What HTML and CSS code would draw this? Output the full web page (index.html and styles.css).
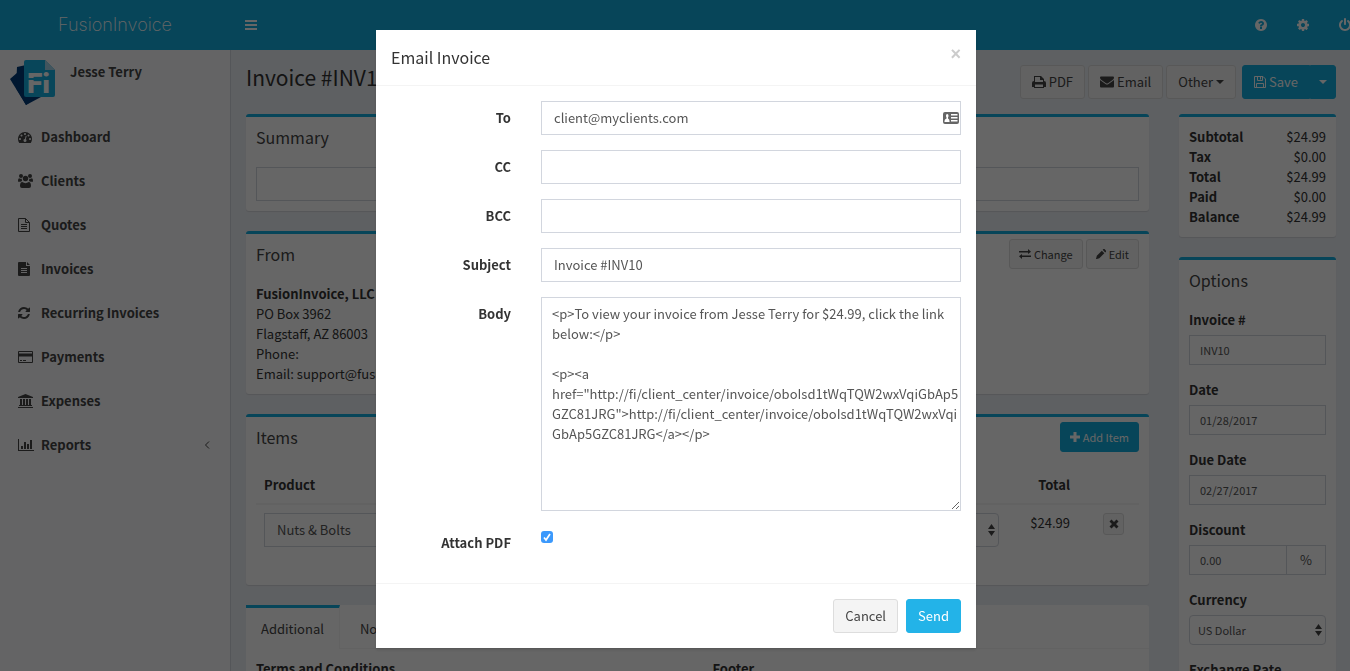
FILE: index.html
```
<!DOCTYPE html>
<html lang="en">
<head>
    <meta charset="UTF-8">
    <meta name="viewport" content="width=device-width, initial-scale=1.0">
    <title>FusionInvoice</title>
    <link rel="stylesheet" href="styles.css">
</head>
<body class="modal-open">

    <header class="main-header">
        <a href="#" class="logo">FusionInvoice</a>
        <nav class="navbar">
            <a href="#" class="sidebar-toggle" aria-label="Toggle navigation">
                <svg class="icon" viewBox="0 0 14 14"><path d="M1 2h12v2H1zM1 6h12v2H1zM1 10h12v2H1z"/></svg>
            </a>
            <div class="navbar-menu">
                <a href="#" aria-label="Help">
                    <svg class="icon" viewBox="0 0 1792 1792"><path d="M1024 1376v-192q0-14-9-23t-23-9h-192q-14 0-23 9t-9 23v192q0 14 9 23t23 9h192q14 0 23-9t9-23zm256-672q0-88-55.500-163t-138.500-116-170-41q-243 0-371 213-15 24 8 42l132 100q7 6 19 6 16 0 25-12 53-68 86-92 34-24 86-24 48 0 85.500 26t37.500 59q0 38-20 61t-68 45q-63 28-115.500 86.500t-52.500 125.500v36q0 14 9 23t23 9h192q14 0 23-9t9-23q0-19 21.500-49.500t54.500-49.500q32-18 49-28.500t46-35 44.500-48 28-60.500 12.500-81zm384 192q0 209-103 385.500t-279.500 279.500-385.500 103-385.500-103-279.500-279.500-103-385.500 103-385.500 279.500-279.500 385.500-103 385.500 103 279.500 279.500 103 385.500z"/></svg>
                </a>
                <a href="#" aria-label="Settings">
                    <svg class="icon" viewBox="0 0 1792 1792"><path d="M1152 896q0-106-75-181t-181-75-181 75-75 181 75 181 181 75 181-75 75-181zm512-109v222q0 12-8 23t-20 13l-185 28q-19 54-39 91 35 50 107 138 10 12 10 25t-9 23q-27 37-99 108t-94 71q-12 0-26-9l-138-108q-44 23-91 38-16 136-29 186-7 28-36 28h-222q-14 0-24.500-8.500t-11.500-21.500l-28-184q-49-16-90-37l-141 107q-10 9-25 9-14 0-25-11-126-114-165-168-7-10-7-23 0-12 8-23 15-21 51-66.500t54-70.500q-27-50-41-99l-183-27q-13-2-21-12.500t-8-23.500v-222q0-12 8-23t19-13l186-28q14-46 39-92-40-57-107-138-10-12-10-24 0-10 9-23 26-36 98.500-107.500t94.500-71.500q13 0 26 10l138 107q44-23 91-38 16-136 29-186 7-28 36-28h222q14 0 24.500 8.500t11.500 21.500l28 184q49 16 90 37l142-107q9-9 24-9 13 0 25 10 129 119 165 170 7 8 7 22 0 12-8 23-15 21-51 66.500t-54 70.500q26 50 41 98l183 28q13 2 21 12.500t8 23.500z"/></svg>
                </a>
                <a href="#" aria-label="Sign out">
                    <svg class="icon" viewBox="0 0 1792 1792"><path d="M1664 896q0 156-61 298t-164 245-245 164-298 61-298-61-245-164-164-245-61-298q0-182 80.500-343t226.500-270q43-32 95.500-25t83.500 50q32 42 24.500 94.500t-49.500 84.500q-98 74-151.500 181t-53.500 228q0 104 40.500 198.500t109.500 163.500 163.500 109.500 198.500 40.500 198.500-40.500 163.500-109.500 109.500-163.500 40.500-198.500q0-121-53.500-228t-151.500-181q-42-32-49.500-84.500t24.500-94.500q31-43 84-50t95 25q146 109 226.500 270t80.500 343zm-640-768v640q0 52-38 90t-90 38-90-38-38-90v-640q0-52 38-90t90-38 90 38 38 90z"/></svg>
                </a>
            </div>
        </nav>
    </header>

    <div class="wrapper">
        <aside class="sidebar">
            <div class="user-panel">
                <svg class="user-logo" viewBox="0 0 45 45">
                    <path d="M0 19L15 6l16 31-15 8z" fill="#003a78"/>
                    <path d="M7 7l9-2v30l10 3-10 7L6 28z" fill="#003a78"/>
                    <path d="M16 0h19l10 10v25q0 2-2 2H16q-2 0-2-2V2q0-2 2-2z" fill="#14aee2"/>
                    <path d="M35 0l10 10H35z" fill="#a5d5ea"/>
                    <text x="17" y="33" class="user-logo-text">Fi</text>
                    <path d="M18 18h22v2H18z" fill="#14aee2"/>
                </svg>
                <span>Jesse Terry</span>
            </div>
            <ul class="sidebar-menu">
                <li><a href="#">
                    <svg class="icon" viewBox="0 0 1792 1792"><path d="M384 1152q0-53-37.500-90.500t-90.500-37.500-90.500 37.500-37.500 90.500 37.500 90.500 90.500 37.500 90.500-37.500 37.500-90.500zm192-448q0-53-37.500-90.500t-90.500-37.500-90.500 37.500-37.500 90.500 37.500 90.500 90.500 37.500 90.500-37.500 37.500-90.500zm428 481l101-382q6-26-7.500-48.500t-38.500-29.500-48 6.500-30 39.500l-101 382q-60 5-107 43.500t-63 98.500q-20 77 20 146t117 89 146-20 89-117q16-60-6-117t-72-91zm660-33q0-53-37.500-90.500t-90.500-37.500-90.500 37.500-37.500 90.500 37.500 90.500 90.500 37.500 90.500-37.500 37.500-90.500zm-640-640q0-53-37.500-90.500t-90.500-37.500-90.500 37.500-37.500 90.500 37.500 90.500 90.500 37.500 90.500-37.500 37.500-90.500zm448 192q0-53-37.500-90.500t-90.500-37.500-90.500 37.500-37.500 90.500 37.500 90.500 90.500 37.500 90.500-37.500 37.500-90.500zm320 448q0 261-141 483-19 29-54 29h-1402q-35 0-54-29-141-221-141-483 0-182 71-348t191-286 286-191 348-71 348 71 286 191 191 286 71 348z"/></svg>
                    <span>Dashboard</span></a></li>
                <li><a href="#">
                    <svg class="icon icon-wide" viewBox="0 0 15 14"><circle cx="3" cy="2" r="2"/><circle cx="12" cy="2" r="2"/><circle cx="7.500" cy="4.500" r="2.700"/><path d="M0 7.500Q0 4.300 1.300 4.300q1.200.8 2.500.4Q3.600 6 4.200 7 3.300 7 2.500 7.800H1Q0 7.800 0 7.500zM15 7.500Q15 4.300 13.700 4.300q-1.200.8-2.500.4Q11.400 6 10.800 7q.9 0 1.700.8H14q1 0 1-.3zM2 12q0-4 2.300-4Q7.500 10.300 10.700 8 13 8 13 12q0 2-2 2H4q-2 0-2-2z"/></svg>
                    <span>Clients</span></a></li>
                <li><a href="#">
                    <svg class="icon" viewBox="1 0 14 14"><path d="M1.500.5h7l4 4v9h-11zM8.500.5v4h4M4 6.500h6M4 8.500h6M4 10.500h6" class="stroke"/></svg>
                    <span>Quotes</span></a></li>
                <li><a href="#">
                    <svg class="icon" viewBox="0 0 14 14"><path fill-rule="evenodd" d="M1 0h7v4h4v9q0 1-1 1H1q-1 0-1-1V1q0-1 1-1zM9 0l3 3H9zM3 6v1h6V6zM3 8v1h6V8zM3 10v1h6v-1z"/></svg>
                    <span>Invoices</span></a></li>
                <li><a href="#">
                    <svg class="icon" viewBox="128 0 1792 1792"><path d="M1639 1056q0 5-1 7-64 268-268 434.500t-478 166.500q-146 0-282.500-55t-243.500-157l-129 129q-19 19-45 19t-45-19-19-45v-448q0-26 19-45t45-19h448q26 0 45 19t19 45-19 45l-137 137q71 66 161 102t187 36q134 0 250-65t186-179q11-17 53-117 8-23 30-23h192q13 0 22.500 9.500t9.500 22.500zm25-800v448q0 26-19 45t-45 19h-448q-26 0-45-19t-19-45 19-45l138-138q-148-137-349-137-134 0-250 65t-186 179q-11 17-53 117-8 23-30 23h-199q-13 0-22.500-9.500t-9.500-22.500v-7q65-268 270-434.500t480-166.500q146 0 284 55.500t245 156.500l130-129q19-19 45-19t45 19 19 45z"/></svg>
                    <span>Recurring Invoices</span></a></li>
                <li><a href="#">
                    <svg class="icon icon-wide" viewBox="0 0 15 14"><path fill-rule="evenodd" d="M1 1h13q1 0 1 1v10q0 1-1 1H1q-1 0-1-1V2q0-1 1-1zM1 2v1.500h13V2zM1 6.500V12h13V6.500zM2 10h2v1H2zM5 10h3v1H5z"/></svg>
                    <span>Payments</span></a></li>
                <li><a href="#">
                    <svg class="icon icon-wide" viewBox="0 0 15 14"><path d="M7.500 0L15 3v1H0V3zM2 5h2v6h1V5h2v6h1V5h2v6h1V5h2v6h1v1H1v-1h1zM0 13h15v1H0z"/></svg>
                    <span>Expenses</span></a></li>
                <li><a href="#">
                    <svg class="icon icon-chart" viewBox="0 0 16 14"><path d="M0 1h1v11h15v1H0zM3 8h2v3H3zM6 4h2v7H6zM9 6h2v5H9zM12 2h2v9h-2z"/></svg>
                    <span>Reports</span>
                    <svg class="icon" viewBox="0 0 14 14"><path d="M9 3.500L5.500 7 9 10.500" class="stroke"/></svg></a></li>
            </ul>
        </aside>

        <main class="content">
            <section class="content-header">
                <h1>Invoice #INV10</h1>
                <div class="actions">
                    <button class="btn btn-default"><svg class="icon" viewBox="0 0 14 14"><path fill-rule="evenodd" d="M2 1h7l3 3v2q2 0 2 2v4h-2v1H2v-1H0V8q0-2 2-2zM3 2v5h8V5H8V2zM3 9.500V12h8V9.500z"/></svg> PDF</button>
                    <button class="btn btn-default"><svg class="icon" viewBox="0 0 14 14"><path d="M0 2.500Q0 1.500 1 1.500h12q1 0 1 1Q14 4 12.500 5L8 8.200q-1 .6-2 0L1.500 5Q0 4 0 2.500zM0 5l5.500 4q1.500 1 3 0L14 5v6.500q0 1-1 1H1q-1 0-1-1z"/></svg> Email</button>
                    <button class="btn btn-default">Other <span class="caret"></span></button>
                    <div class="btn-group">
                        <button class="btn btn-primary"><svg class="icon icon-save" viewBox="0 0 12 14"><path d="M.5 1.500h8.500l2.500 2.500v8.500H.5zM3.500 1.500v4h5v-4M2.500 12.500V8.500h7v4M6.500 2v2.500" class="stroke"/></svg> Save</button>
                        <button class="btn btn-primary btn-caret" aria-label="More save options"><span class="caret"></span></button>
                    </div>
                </div>
            </section>

            <div class="row">
                <div class="col-main">
                    <section class="box">
                        <div class="box-header"><h3><label for="summary">Summary</label></h3></div>
                        <div class="box-body"><input type="text" id="summary" class="form-control"></div>
                    </section>

                    <section class="box">
                        <div class="box-header">
                            <h3>From</h3>
                            <div class="box-tools">
                                <button class="btn btn-default btn-sm"><svg class="icon icon-sm" viewBox="0 0 12 12"><path d="M0 3h9V1l3 2.700L9 6V4.500H0zM12 7.500H3V6L0 8.300 3 11V9h9z"/></svg> Change</button>
                                <button class="btn btn-default btn-sm"><svg class="icon icon-xs" viewBox="0 0 12 12"><path d="M1 8l6-6 3 3-6 6-3 1H0zM8 1l1-1q.6-.3 1.200 0L12 2q.4.600 0 1.200l-1 1z"/></svg> Edit</button>
                            </div>
                        </div>
                        <div class="box-body">
                            <strong>FusionInvoice, LLC</strong><br>
                            PO Box 3962<br>
                            Flagstaff, AZ 86003<br>
                            Phone:<br>
                            Email: support@fusioninvoice.com
                        </div>
                    </section>

                    <section class="box">
                        <div class="box-header">
                            <h3>Items</h3>
                            <div class="box-tools">
                                <button class="btn btn-primary btn-sm"><svg class="icon icon-xs" viewBox="0 0 10 10"><path d="M3.500 0h3v3.500H10v3H6.500V10h-3V6.500H0v-3h3.500z"/></svg> Add Item</button>
                            </div>
                        </div>
                        <div class="box-body">
                            <table class="items">
                                <thead>
                                    <tr>
                                        <th>Product</th>
                                        <th>Description</th>
                                        <th>Quantity</th>
                                        <th>Price</th>
                                        <th>Tax</th>
                                        <th class="total">Total</th>
                                        <th class="remove"></th>
                                    </tr>
                                </thead>
                                <tbody>
                                    <tr>
                                        <td><input type="text" class="form-control" value="Nuts &amp; Bolts" aria-label="Product"></td>
                                        <td><input type="text" class="form-control" aria-label="Description"></td>
                                        <td><input type="text" class="form-control" value="1.00" aria-label="Quantity"></td>
                                        <td><input type="text" class="form-control" value="24.99" aria-label="Price"></td>
                                        <td>
                                            <div class="select">
                                                <select class="form-control" aria-label="Tax"><option>None</option></select>
                                                <svg viewBox="0 0 7 12"><path d="M3.500 0L7 5H0zM0 7h7l-3.500 5z"/></svg>
                                            </div>
                                        </td>
                                        <td class="total">$24.99</td>
                                        <td class="remove"><button class="btn btn-default btn-xs" aria-label="Remove item"><svg class="icon icon-xs" viewBox="0 0 10 10"><path d="M2.500.5L5 3 7.500.5l2 2L7 5l2.500 2.500-2 2L5 7 2.500 9.500l-2-2L3 5 .5 2.500z"/></svg></button></td>
                                    </tr>
                                </tbody>
                            </table>
                        </div>
                    </section>

                    <section class="tabs">
                        <ul class="nav-tabs">
                            <li class="active"><a href="#">Additional</a></li>
                            <li><a href="#">Notes</a></li>
                            <li><a href="#">Payments</a></li>
                        </ul>
                        <div class="tab-content">
                            <div>
                                <label for="terms">Terms and Conditions</label>
                                <textarea id="terms" class="form-control" rows="5"></textarea>
                            </div>
                            <div>
                                <label for="footer">Footer</label>
                                <textarea id="footer" class="form-control" rows="5"></textarea>
                            </div>
                        </div>
                    </section>
                </div>

                <div class="col-side">
                    <section class="box">
                        <dl class="box-body totals">
                            <dt>Subtotal</dt><dd>$24.99</dd>
                            <dt>Tax</dt><dd>$0.00</dd>
                            <dt>Total</dt><dd>$24.99</dd>
                            <dt>Paid</dt><dd>$0.00</dd>
                            <dt>Balance</dt><dd>$24.99</dd>
                        </dl>
                    </section>

                    <section class="box">
                        <div class="box-header"><h3>Options</h3></div>
                        <div class="box-body options">
                            <div class="form-group">
                                <label for="number">Invoice #</label>
                                <input type="text" id="number" class="form-control input-sm" value="INV10">
                            </div>
                            <div class="form-group">
                                <label for="date">Date</label>
                                <input type="text" id="date" class="form-control input-sm" value="01/28/2017">
                            </div>
                            <div class="form-group">
                                <label for="due">Due Date</label>
                                <input type="text" id="due" class="form-control input-sm" value="02/27/2017">
                            </div>
                            <div class="form-group">
                                <label for="discount">Discount</label>
                                <div class="input-group">
                                    <input type="text" id="discount" class="form-control input-sm" value="0.00">
                                    <span class="addon">%</span>
                                </div>
                            </div>
                            <div class="form-group">
                                <label for="currency">Currency</label>
                                <div class="select select-sm">
                                    <select id="currency" class="form-control input-sm"><option>US Dollar</option></select>
                                    <svg viewBox="0 0 7 12"><path d="M3.500 0L7 5H0zM0 7h7l-3.500 5z"/></svg>
                                </div>
                            </div>
                            <div class="form-group">
                                <label for="rate">Exchange Rate</label>
                                <input type="text" id="rate" class="form-control input-sm" value="1.0000000">
                            </div>
                        </div>
                    </section>
                </div>
            </div>
        </main>
    </div>

    <div class="modal-backdrop">
        <div class="modal" role="dialog" aria-labelledby="modal-title">
            <div class="modal-header">
                <h4 id="modal-title">Email Invoice</h4>
                <button class="close" aria-label="Close">×</button>
            </div>
            <form class="modal-body">
                <label for="to">To</label>
                <div class="contact-field">
                    <input type="text" id="to" class="form-control" value="client@myclients.com">
                    <svg viewBox="0 0 16 12"><path fill-rule="evenodd" d="M2 0h12q2 0 2 2v8q0 2-2 2H2q-2 0-2-2V2q0-2 2-2zM3 3.500Q3 5 3.500 5.500v1Q1.500 7 1.500 9v1h5V9q0-2-1.500-2.500v-1Q5.500 5 5.500 3.500 5.500 2 4.200 2T3 3.500zM8 2v1.500h6.500V2zM8 5v1.500h6.500V5zM8 8v1.500h6.500V8z"/></svg>
                </div>
                <label for="cc">CC</label>
                <input type="text" id="cc" class="form-control">
                <label for="bcc">BCC</label>
                <input type="text" id="bcc" class="form-control">
                <label for="subject">Subject</label>
                <input type="text" id="subject" class="form-control" value="Invoice #INV10">
                <label for="body">Body</label>
                <textarea id="body" class="form-control" rows="10" spellcheck="false">&lt;p&gt;To view your invoice from Jesse Terry for $24.99, click the link below:&lt;/p&gt;

&lt;p&gt;&lt;a href="http://fi/client_center/invoice/oboIsd1tWqTQW2wxVqiGbAp5GZC81JRG"&gt;http://fi/client_center/invoice/oboIsd1tWqTQW2wxVqiGbAp5GZC81JRG&lt;/a&gt;&lt;/p&gt;</textarea>
                <label for="attach">Attach PDF</label>
                <input type="checkbox" id="attach" checked>
            </form>
            <div class="modal-footer">
                <button class="btn btn-default">Cancel</button>
                <button class="btn btn-primary btn-send">Send</button>
            </div>
        </div>
    </div>

</body>
</html>
```
FILE: styles.css
```
* {
    box-sizing: border-box;
}
body {
    margin: 0;
    font-family: "Noto Sans CJK SC", "Noto Sans", sans-serif;
    font-size: 13px;
    line-height: 20px;
    color: #333;
    background: #ecf0f5;
}
body.modal-open {
    height: 100vh;
    overflow: hidden;
}
a {
    color: inherit;
    text-decoration: none;
}
ul, dl, dd, h1, h3, h4 {
    margin: 0;
    padding: 0;
    list-style: none;
    font-weight: normal;
}
button, input, select, textarea {
    font: inherit;
    color: inherit;
}
label, strong, th, dt {
    font-weight: 700;
}
.icon {
    width: 14px;
    height: 14px;
    fill: currentColor;
    flex: none;
}
.icon-wide {
    width: 15px;
}
.icon-chart {
    width: 16px;
}
.icon-save {
    width: 12px;
}
.icon-sm {
    width: 12px;
    height: 12px;
}
.icon-xs {
    width: 10px;
    height: 10px;
}
.stroke {
    fill: none;
    stroke: currentColor;
}

/* Header */
.main-header {
    display: flex;
    height: 50px;
    color: #fff;
    background: #12acde;
}
.logo {
    width: 230px;
    line-height: 50px;
    text-align: center;
    font-family: Inter, sans-serif;
    font-weight: 200;
    font-size: 18px;
}
.navbar {
    flex: 1;
    min-width: 0;
    display: flex;
    justify-content: space-between;
    align-items: center;
    overflow: hidden;
}
.sidebar-toggle {
    display: flex;
    padding: 0 14px;
}
.navbar-menu {
    display: flex;
    gap: 28px;
    margin-right: -2px;
}
.navbar-menu a {
    display: flex;
}

/* Sidebar */
.wrapper {
    display: flex;
    height: calc(100vh - 50px);
}
.sidebar {
    width: 231px;
    flex: none;
    background: #f9fafc;
    border-right: 1px solid #d2d6de;
    color: #444;
    font-weight: 600;
}
.user-panel {
    display: flex;
    gap: 15px;
    padding: 10px;
    line-height: 24px;
}
.user-logo {
    width: 45px;
    height: 45px;
}
.user-logo-text {
    fill: #fff;
    font: 900 28px Roboto, sans-serif;
}
.sidebar-menu {
    font-weight: 600;
}
.sidebar-menu a {
    display: grid;
    grid-template-columns: 23px 1fr auto;
    align-items: center;
    height: 44px;
    padding: 0 16px 0 18px;
}

/* Content */
.content {
    flex: 1;
    min-width: 0;
    padding: 15px 14px 0 15px;
    overflow: hidden;
}
.content-header {
    display: flex;
    justify-content: space-between;
    align-items: flex-start;
    margin-bottom: 15px;
}
.content-header h1 {
    font-size: 21px;
    line-height: 24px;
}
.actions {
    display: flex;
    gap: 3px;
}
.btn-group {
    display: flex;
    margin-left: 3px;
}
.btn {
    display: inline-flex;
    align-items: center;
    justify-content: center;
    gap: 3px;
    height: 34px;
    padding: 0 11px;
    border: 1px solid #ddd;
    border-radius: 3px;
    background: #f4f4f4;
    color: #444;
    white-space: nowrap;
}
.btn-primary {
    background: #12acde;
    border-color: #12acde;
    color: #fff;
}
.btn-group .btn:first-child {
    border-radius: 3px 0 0 3px;
}
.btn-group .btn:last-child {
    border-radius: 0 3px 3px 0;
}
.btn-caret {
    padding: 0 8px;
}
.btn-sm {
    height: 30px;
    padding: 0 9px;
    font-size: 11px;
}
.btn-xs {
    width: 21px;
    height: 22px;
    padding: 0;
}
.caret {
    border-top: 4px solid;
    border-left: 4px solid transparent;
    border-right: 4px solid transparent;
}
.row {
    display: grid;
    grid-template-columns: minmax(0, 1fr) 157px;
    gap: 30px;
}
.box {
    margin-bottom: 20px;
    border-top: 3px solid #12acde;
    border-radius: 3px;
    background: #fff;
    box-shadow: 0 1px 1px rgba(0, 0, 0, 0.1);
}
.box-header {
    display: flex;
    justify-content: space-between;
    align-items: center;
    height: 40px;
    padding: 0 10px;
    color: #444;
}
.box-header h3 {
    font-size: 16px;
}
.box-header label {
    font-weight: normal;
}
.box-tools {
    display: flex;
    gap: 3px;
}
.box-body {
    padding: 10px;
}
.form-control {
    display: block;
    width: 100%;
    height: 34px;
    padding: 5px 12px 7px;
    border: 1px solid #d2d6de;
    border-radius: 0;
    background: #fff;
    color: #555;
    outline: none;
}
textarea.form-control {
    height: auto;
    padding: 6px 0 6px 10px;
}
.form-control.input-sm {
    height: 30px;
    padding: 5px 10px;
    font-size: 11px;
}
.select {
    position: relative;
}
.select select {
    appearance: none;
    border-radius: 4px;
}
.select svg {
    position: absolute;
    right: 4px;
    top: 11px;
    width: 7px;
    height: 12px;
    fill: #444;
}
.select-sm .input-sm {
    padding: 4px 8px 6px;
}
.select-sm svg {
    top: 9px;
}
.items {
    width: 100%;
    margin-bottom: 20px;
    border-collapse: collapse;
    table-layout: fixed;
}
.items th, .items td {
    padding: 8px;
    text-align: left;
    vertical-align: top;
}
.items th {
    border-bottom: 2px solid #f4f4f4;
}
.items .total {
    width: 71px;
    text-align: right;
}
.items .remove {
    width: 61px;
    padding-left: 25px;
}
.tabs {
    background: #fff;
    border-radius: 3px;
}
.nav-tabs {
    display: flex;
    border-bottom: 1px solid #f4f4f4;
}
.nav-tabs li {
    border-top: 3px solid transparent;
    border-right: 1px solid transparent;
    color: #444;
}
.nav-tabs .active {
    margin-bottom: -1px;
    border-top-color: #12acde;
    border-right-color: #f4f4f4;
    background: #fff;
}
.nav-tabs a {
    display: block;
    padding: 11px 15px 9px;
}
.nav-tabs li + li {
    margin-left: 5px;
}
.tab-content {
    display: grid;
    grid-template-columns: 1fr 1fr;
    gap: 30px;
    padding: 10px;
}
.totals {
    display: grid;
    grid-template-columns: 1fr auto;
}
.totals dd {
    text-align: right;
}
.form-group {
    margin-bottom: 15px;
}
.form-group label {
    display: block;
    margin-bottom: 5px;
}
.input-group {
    display: flex;
}
.addon {
    flex: none;
    width: 39px;
    border: 1px solid #d2d6de;
    border-left: 0;
    line-height: 28px;
    text-align: center;
    color: #555;
}

/* Modal */
.modal-backdrop {
    position: fixed;
    inset: 0;
    padding: 30px 0 0 2px;
    background: rgba(0, 0, 0, 0.6);
}
.modal {
    max-width: 600px;
    margin: 0 auto;
    background: #fff;
    box-shadow: 0 2px 3px rgba(0, 0, 0, 0.13);
}
.modal-header {
    display: flex;
    justify-content: space-between;
    align-items: flex-start;
    padding: 15px;
    border-bottom: 1px solid #f4f4f4;
}
.modal-header h4 {
    font-size: 16px;
    line-height: 25px;
}
.close {
    padding: 0;
    border: 0;
    background: none;
    color: #ccc;
    font: 700 18px/18px "Liberation Sans", sans-serif;
}
.modal-body {
    display: grid;
    grid-template-columns: 120px 1fr;
    gap: 15px 30px;
    padding: 15px 15px 30px;
}
.modal-body label {
    padding-top: 7px;
    text-align: right;
}
.modal-body input[type="checkbox"] {
    appearance: none;
    width: 12px;
    height: 12px;
    margin: 5px 0 0;
    border-radius: 3px;
    background: #3b99fc url("data:image/svg+xml,%3Csvg xmlns='http://www.w3.org/2000/svg' viewBox='0 0 12 12'%3E%3Cpath d='M3 6.500l2 2.500 4-6' fill='none' stroke='white' stroke-width='1.700'/%3E%3C/svg%3E");
}
.contact-field {
    position: relative;
}
.contact-field svg {
    position: absolute;
    right: 2px;
    top: 11px;
    width: 16px;
    height: 12px;
    fill: #666;
}
.modal-footer {
    display: flex;
    justify-content: flex-end;
    gap: 8px;
    padding: 15px;
    border-top: 1px solid #f4f4f4;
}
.btn-send {
    background: #23b3e8;
    border-color: #23b3e8;
}
```
